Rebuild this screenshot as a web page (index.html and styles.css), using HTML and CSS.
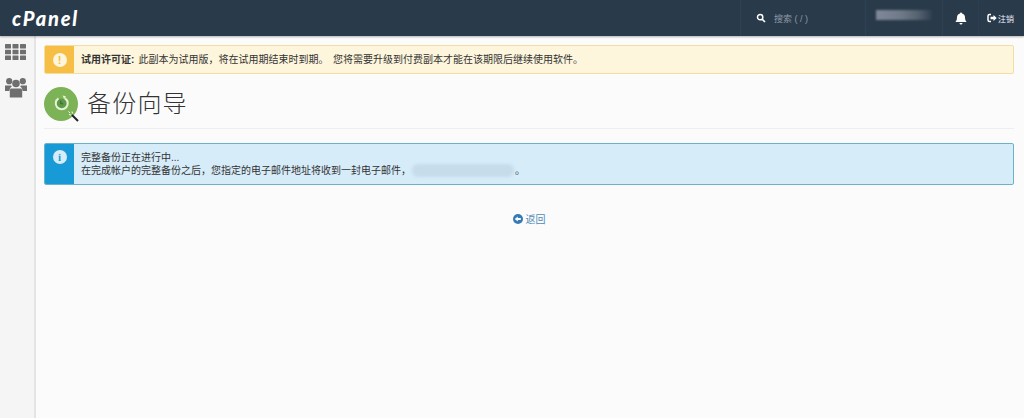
FILE: index.html
```html
<!DOCTYPE html>
<html lang="zh-CN">
<head>
<meta charset="utf-8">
<title>备份向导</title>
<link rel="stylesheet" href="styles.css">
</head>
<body>
<header class="topbar">
  <a class="logo">cPanel</a>
  <div class="top-right">
    <div class="search">
      <svg class="search-icon" viewBox="0 0 12 12"><circle cx="5" cy="5" r="3.2" fill="none" stroke="#fff" stroke-width="1.8"/><path d="M7.5 7.5L10.8 10.8" stroke="#fff" stroke-width="2"/></svg>
      <span>搜索 ( / )</span>
    </div>
    <div class="user"><span class="user-blur"></span></div>
    <div class="bell">
      <svg viewBox="0 0 12 13" width="12" height="13"><path d="M6 0.5a1 1 0 0 1 1 1c2 .4 3 2 3 4 0 2.500.8 3.500 1.600 4.500H.4C1.200 9 2 8 2 5.500c0-2 1-3.600 3-4a1 1 0 0 1 1-1zM4.500 11h3a1.500 1.500 0 0 1-3 0z" fill="#fff"/></svg>
    </div>
    <div class="logout">
      <svg viewBox="0 0 10 10" width="10" height="10"><path d="M4 1.500H2.500a1.500 1.500 0 0 0-1.500 1.500v4a1.500 1.500 0 0 0 1.500 1.500H4" fill="none" stroke="#fff" stroke-width="1.500"/><path d="M3.500 3.800h3V2l3.200 3-3.200 3V6.200h-3z" fill="#fff"/></svg>
      <span>注销</span>
    </div>
  </div>
</header>
<div class="layout">
  <nav class="side">
    <svg class="side-grid" viewBox="0 0 21 16" width="21" height="16"><g fill="#6f6f6f"><rect x="0" y="0" width="6" height="4.500" rx=".6"/><rect x="7.500" y="0" width="6" height="4.500" rx=".6"/><rect x="15" y="0" width="6" height="4.500" rx=".6"/><rect x="0" y="5.800" width="6" height="4.500" rx=".6"/><rect x="7.500" y="5.800" width="6" height="4.500" rx=".6"/><rect x="15" y="5.800" width="6" height="4.500" rx=".6"/><rect x="0" y="11.500" width="6" height="4.500" rx=".6"/><rect x="7.500" y="11.500" width="6" height="4.500" rx=".6"/><rect x="15" y="11.500" width="6" height="4.500" rx=".6"/></g></svg>
    <svg class="side-users" viewBox="0 0 22 20" width="22" height="20"><g fill="#6f6f6f"><circle cx="4.200" cy="3.200" r="3.100"/><circle cx="17.800" cy="3.200" r="3.100"/><circle cx="11" cy="5.500" r="3.800"/><path d="M0 7.500h5.500c.6 0 1.200.5 1.400 1-1.600 1-2.400 2.500-2.400 4.500H0z"/><path d="M22 7.500h-5.500c-.6 0-1.200.5-1.400 1 1.600 1 2.400 2.500 2.400 4.500H22z"/><path d="M6 10.500h10c.8 0 1.200 1 1.200 2.500v6.500H4.800V13c0-1.500.4-2.500 1.200-2.500z"/></g></svg>
  </nav>
  <main class="content">
    <div class="alert alert-warn">
      <div class="alert-icon warn-icon"><span class="dot dot-warn">!</span></div>
      <div class="alert-body warn-body"><strong>试用许可证:</strong> 此副本为试用版，将在试用期结束时到期。 您将需要升级到付费副本才能在该期限后继续使用软件。</div>
    </div>
    <div class="page-head">
      <div class="page-icon">
        <svg viewBox="0 0 36 36" width="36" height="36">
          <circle cx="17" cy="17" r="17" fill="#7cb356"/>
          <circle cx="17.500" cy="16.500" r="4.800" fill="#5f9a48"/>
          <path d="M14.500 11.300a6 6 0 1 0 6.500 0" fill="none" stroke="#e6f1d6" stroke-width="2"/>
          <path d="M18.500 8.500l3.500.8-1.800 3z" fill="#e6f1d6"/>
          <path d="M16.800 13.800v3h2.400" fill="none" stroke="#33662a" stroke-width="1"/>
          <path d="M28 28l6 6" stroke="#222" stroke-width="2"/>
          <path d="M25 27.500l2 .5M28 24.500l.5 2M24.500 24.500l1.500 1.500" stroke="#fff" stroke-width="1"/>
        </svg>
      </div>
      <h1>备份向导</h1>
    </div>
    <div class="alert alert-info">
      <div class="alert-icon info-icon"><span class="dot dot-info">i</span></div>
      <div class="alert-body info-body">完整备份正在进行中...<br>在完成帐户的完整备份之后，您指定的电子邮件地址将收到一封电子邮件，<span class="mail-blur"></span>。</div>
    </div>
    <div class="back">
      <a><svg viewBox="0 0 10 10" width="10" height="10"><circle cx="5" cy="5" r="5" fill="#337ab7"/><path d="M1.800 5l3-2.400v1.500h3v1.800h-3v1.500z" fill="#fff"/></svg> 返回</a>
    </div>
  </main>
</div>
</body>
</html>
```
FILE: styles.css
```css
* { box-sizing: border-box; }
html, body { margin: 0; height: 100%; }
body {
  font-family: "Liberation Sans", "Noto Sans CJK SC", sans-serif;
  font-size: 10px;
  color: #333;
  background: #fbfbfb;
  overflow: hidden;
}
.topbar {
  height: 36px;
  background: #293a4a;
  display: flex;
  align-items: center;
  justify-content: space-between;
  box-shadow: 0 1px 2px rgba(0,0,0,.3);
  position: relative;
}
.logo {
  font-family: "Lato", sans-serif;
  font-weight: 900;
  font-style: italic;
  font-size: 20px;
  color: #fff;
  margin-left: 12px;
  letter-spacing: 1.800px;
}
.top-right { display: flex; height: 36px; align-items: stretch; }
.top-right > div {
  display: flex;
  align-items: center;
  border-left: 1px solid #2f4154;
}
.search { width: 125px; padding-left: 15px; gap: 8px; color: #8f9aa6; font-size: 9px; }
.search-icon { width: 10px; height: 10px; }
.user { width: 77px; padding-left: 10px; }
.user-blur {
  width: 56px;
  height: 10px;
  margin-top: -6px;
  background: linear-gradient(90deg, #80889a 0, #6f7a88 45%, #55626f 75%, #2f4053 100%);
  filter: blur(1px);
}
.bell { width: 36px; justify-content: center; }
.logout { width: 46px; padding-left: 8px; gap: 1px; color: #eef; font-size: 8px; border-left-color: #2d3e50 !important; }
.layout { display: flex; height: 382px; }
.side {
  width: 36px;
  background: #f5f5f5;
  border-right: 2px solid #e4e4e4;
  display: flex;
  flex-direction: column;
  align-items: center;
  padding: 8px 3px 0 0;
  gap: 18px;
  flex: none;
}
.content { flex: 1; padding: 9px 10px 0 8px; min-width: 0; }
.alert {
  display: flex;
  border-radius: 2px;
  border: 1px solid;
  overflow: hidden;
}
.alert-warn { height: 29px; background: #fdf6dc; border-color: #f2dfa0; }
.alert-info { height: 42px; margin-top: 14px; background: #d6ecf9; border-color: #6cb2c6; }
.alert-icon { width: 29px; display: flex; justify-content: center; flex: none; }
.warn-icon { background: #f6be45; align-items: center; }
.info-icon { background: #189ad6; padding-top: 6px; }
.dot {
  width: 14px;
  height: 14px;
  border-radius: 50%;
  background: #fdf6dc;
  display: flex;
  align-items: center;
  justify-content: center;
  font-weight: 700;
  font-size: 11px;
}
.dot-warn { color: #f6be45; }
.dot-info { background: #d6ecf9; color: #189ad6; font-family: "Liberation Serif", serif; }
.alert-body { padding-left: 7px; line-height: 13px; color: #333; font-size: 10px; align-self: center; }
.warn-body { word-spacing: 1.500px; }
.mail-blur {
  display: inline-block;
  width: 102px;
  height: 13px;
  vertical-align: -3px;
  margin: 0 1px;
  background: #c6dcea;
  border-radius: 6px;
  filter: blur(1.500px);
}
.page-head {
  display: flex;
  align-items: center;
  gap: 7px;
  height: 55px;
  padding-top: 7px;
  border-bottom: 1px solid #eee;
}
.page-icon { width: 36px; height: 36px; margin-top: 1px; }
.page-icon svg { display: block; }
h1 {
  margin: -6px 0 0;
  font-family: "Noto Sans CJK SC", sans-serif;
  font-weight: 300;
  font-size: 24px;
  letter-spacing: 1.200px;
  color: #333;
  line-height: 30px;
}
.back { text-align: center; margin-top: 29px; color: #4f8bb8; font-size: 10px; line-height: 12px; }
.back svg { vertical-align: -1px; }
```
